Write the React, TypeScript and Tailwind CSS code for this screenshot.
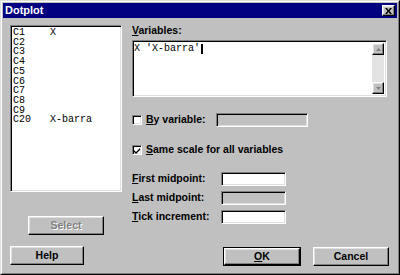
import React from 'react';

const sunken =
  'border border-t-[#808080] border-l-[#808080] border-b-white border-r-white shadow-[inset_1px_1px_0_#000,inset_-1px_-1px_0_#dfdfdf]';
const raised =
  'border border-t-white border-l-white border-b-black border-r-black shadow-[inset_-1px_-1px_0_#808080,inset_1px_1px_0_#dfdfdf]';

const columns = [
  ['C1', 'X'],
  ['C2', ''],
  ['C3', ''],
  ['C4', ''],
  ['C5', ''],
  ['C6', ''],
  ['C7', ''],
  ['C8', ''],
  ['C9', ''],
  ['C20', 'X-barra'],
];

function Check({ checked }: { checked?: boolean }) {
  return (
    <div className={`flex h-[10px] w-[10px] shrink-0 items-center justify-center bg-white ${sunken}`}>
      {checked && (
        <svg width="7" height="7" viewBox="0 0 7 7">
          <path d="M0 3 L2 5 L6 1 L6 3 L2 7 L0 5 Z" fill="#000" />
        </svg>
      )}
    </div>
  );
}

function Field({ disabled, className }: { disabled?: boolean; className: string }) {
  return <div className={`h-[14px] ${disabled ? 'bg-[#c0c0c0]' : 'bg-white'} ${sunken} ${className}`} />;
}

function Button({ children, className }: { children: React.ReactNode; className: string }) {
  return (
    <button className={`flex h-[19px] items-center justify-center bg-[#c0c0c0] ${raised} ${className}`}>
      {children}
    </button>
  );
}

export default function App() {
  return (
    <div
      className="h-[275px] w-[400px] border border-t-[#dfdfdf] border-l-[#dfdfdf] border-b-black border-r-black bg-[#c0c0c0] text-[10.5px] font-bold text-black"
      style={{ fontFamily: '"Liberation Sans", Arial, sans-serif' }}
    >
      <div className="h-full border border-t-white border-l-white border-b-[#808080] border-r-[#808080] p-[1px]">
        {/* title bar */}
        <div className="flex h-[15px] items-center justify-between bg-[#000080] pl-[2px] pr-[2px]">
          <span className="text-[11px] leading-[15px] text-white">Dotplot</span>
          <div className={`flex h-[11px] w-[13px] items-center justify-center bg-[#c0c0c0] ${raised}`}>
            <svg width="7" height="6" viewBox="0 0 7 6">
              <path d="M0 0 L2 0 L3.5 2 L5 0 L7 0 L4.5 3 L7 6 L5 6 L3.5 4 L2 6 L0 6 L2.5 3 Z" fill="#000" />
            </svg>
          </div>
        </div>

        <div className="flex">
          {/* left column */}
          <div className="flex flex-col pl-[7px]">
            <div
              className={`mt-[7px] h-[167px] w-[112px] bg-white px-[2px] py-[2px] font-normal ${sunken}`}
              style={{ fontFamily: '"Liberation Mono", "Courier New", monospace' }}
            >
              {columns.map(([c, name]) => (
                <div key={c} className="flex text-[10px] leading-[9.7px]">
                  <span className="w-[37px]">{c}</span>
                  <span>{name}</span>
                </div>
              ))}
            </div>
            <Button className="ml-[18px] mt-[24px] w-[76px]">
              <span className="font-bold text-[#808080] [text-shadow:1px_1px_0_#fff]">Select</span>
            </Button>
            <Button className="mt-[11px] w-[74px]">Help</Button>
          </div>

          {/* right column */}
          <div className="ml-[10px] flex flex-col">
            <div className="mt-[6px] leading-[12px]">
              <span className="underline">V</span>ariables:
            </div>
            <div className={`mt-[4px] flex h-[57px] w-[255px] bg-white ${sunken}`}>
              <div
                className="flex flex-1 items-start px-[1px] pt-[2px] text-[10px] font-normal leading-[11px] whitespace-pre"
                style={{ fontFamily: '"Liberation Mono", "Courier New", monospace' }}
              >
                X 'X-barra'
                <span className="ml-[1px] mt-[1px] h-[10px] w-[2px] bg-black" />
              </div>
              <div className="my-[2px] mr-[2px] flex w-[12px] flex-col bg-[#e3e3e3]">
                <div className={`flex h-[12px] items-center justify-center bg-[#c0c0c0] ${raised}`}>
                  <svg width="5" height="3" viewBox="0 0 5 3">
                    <path d="M2.5 0 L5 3 L0 3 Z" fill="#808080" />
                  </svg>
                </div>
                <div className="flex-1" />
                <div className={`flex h-[12px] items-center justify-center bg-[#c0c0c0] ${raised}`}>
                  <svg width="5" height="3" viewBox="0 0 5 3">
                    <path d="M0 0 L5 0 L2.5 3 Z" fill="#808080" />
                  </svg>
                </div>
              </div>
            </div>

            <div className="mt-[16px] flex h-[14px] items-center">
              <Check />
              <span className="ml-[4px] w-[70px]">
                <span className="underline">B</span>y variable:
              </span>
              <Field disabled className="w-[92px]" />
            </div>

            <div className="mt-[16px] flex h-[14px] items-center">
              <Check checked />
              <span className="ml-[4px]">
                <span className="underline">S</span>ame scale for all variables
              </span>
            </div>

            <div className="mt-[15px] flex h-[14px] items-center">
              <span className="w-[89px]">
                <span className="underline">F</span>irst midpoint:
              </span>
              <Field className="w-[65px]" />
            </div>
            <div className="mt-[5px] flex h-[14px] items-center">
              <span className="w-[89px]">
                <span className="underline">L</span>ast midpoint:
              </span>
              <Field disabled className="w-[65px]" />
            </div>
            <div className="mt-[5px] flex h-[14px] items-center">
              <span className="w-[89px]">
                <span className="underline">T</span>ick increment:
              </span>
              <Field className="w-[65px]" />
            </div>

            <div className="mt-[23px] flex">
              <div className="ml-[91px] border border-black">
                <Button className="w-[76px] !h-[17px]">
                  <span className="underline">O</span>K
                </Button>
              </div>
              <Button className="ml-[12px] w-[76px]">Cancel</Button>
            </div>
          </div>
        </div>
      </div>
    </div>
  );
}
